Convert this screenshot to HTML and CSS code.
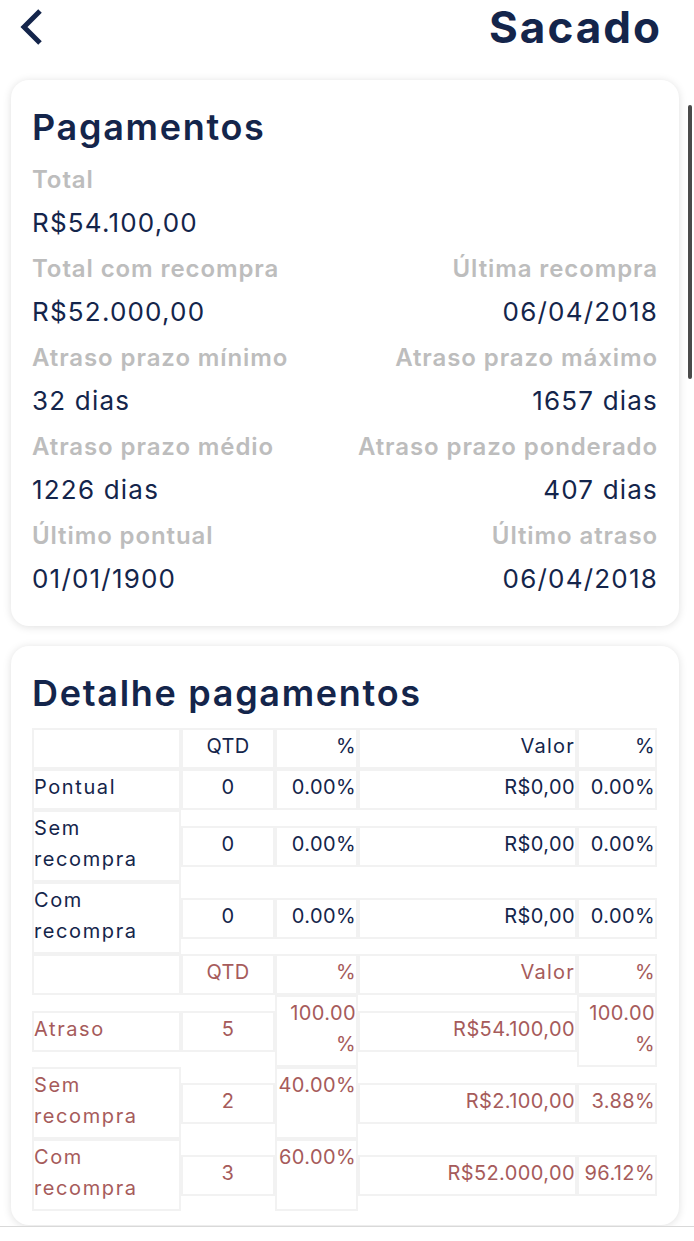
FILE: index.html
```html
<!DOCTYPE html>
<html lang="pt-BR">
<head>
    <meta charset="UTF-8">
    <meta name="viewport" content="width=device-width, initial-scale=1.0">
    <title>Sacado</title>
    <link rel="stylesheet" href="styles.css">
</head>
<body>
    <header class="topbar">
        <a class="back" href="#" aria-label="Voltar">
            <svg width="30" height="40" viewBox="0 0 30 40">
                <path d="M22 4 L6 20 L22 36" fill="none" stroke="#14254b" stroke-width="5"/>
            </svg>
        </a>
        <h1 class="page-title">Sacado</h1>
    </header>

    <!-- Pagamentos -->
    <section class="card">
        <h2 class="card-title">Pagamentos</h2>
        <div class="info-grid">
            <div class="info">
                <div class="info-label">Total</div>
                <div class="info-value">R$54.100,00</div>
            </div>
            <div class="info"></div>

            <div class="info">
                <div class="info-label">Total com recompra</div>
                <div class="info-value">R$52.000,00</div>
            </div>
            <div class="info right">
                <div class="info-label">Última recompra</div>
                <div class="info-value">06/04/2018</div>
            </div>

            <div class="info">
                <div class="info-label">Atraso prazo mínimo</div>
                <div class="info-value">32 dias</div>
            </div>
            <div class="info right">
                <div class="info-label">Atraso prazo máximo</div>
                <div class="info-value">1657 dias</div>
            </div>

            <div class="info">
                <div class="info-label">Atraso prazo médio</div>
                <div class="info-value">1226 dias</div>
            </div>
            <div class="info right">
                <div class="info-label">Atraso prazo ponderado</div>
                <div class="info-value">407 dias</div>
            </div>

            <div class="info">
                <div class="info-label">Último pontual</div>
                <div class="info-value">01/01/1900</div>
            </div>
            <div class="info right">
                <div class="info-label">Último atraso</div>
                <div class="info-value">06/04/2018</div>
            </div>
        </div>
    </section>

    <!-- Detalhe pagamentos -->
    <section class="card card-detail">
        <h2 class="card-title">Detalhe pagamentos</h2>
        <div class="detail-table">
            <div class="trow">
                <div class="tcell c1"></div>
                <div class="tcell c2">QTD</div>
                <div class="tcell c3">%</div>
                <div class="tcell c4 word">Valor</div>
                <div class="tcell c5">%</div>
            </div>
            <div class="trow">
                <div class="tcell c1">Pontual</div>
                <div class="tcell c2">0</div>
                <div class="tcell c3">0.00%</div>
                <div class="tcell c4">R$0,00</div>
                <div class="tcell c5">0.00%</div>
            </div>
            <div class="trow">
                <div class="tcell c1">Sem recompra</div>
                <div class="tcell c2">0</div>
                <div class="tcell c3">0.00%</div>
                <div class="tcell c4">R$0,00</div>
                <div class="tcell c5">0.00%</div>
            </div>
            <div class="trow">
                <div class="tcell c1">Com recompra</div>
                <div class="tcell c2">0</div>
                <div class="tcell c3">0.00%</div>
                <div class="tcell c4">R$0,00</div>
                <div class="tcell c5">0.00%</div>
            </div>

            <div class="trow late">
                <div class="tcell c1"></div>
                <div class="tcell c2">QTD</div>
                <div class="tcell c3">%</div>
                <div class="tcell c4 word">Valor</div>
                <div class="tcell c5">%</div>
            </div>
            <div class="trow late">
                <div class="tcell c1">Atraso</div>
                <div class="tcell c2">5</div>
                <div class="tcell c3">100.00<wbr>%</div>
                <div class="tcell c4">R$54.100,00</div>
                <div class="tcell c5">100.00<wbr>%</div>
            </div>
            <div class="trow late">
                <div class="tcell c1">Sem recompra</div>
                <div class="tcell c2">2</div>
                <div class="tcell c3">40.00%</div>
                <div class="tcell c4">R$2.100,00</div>
                <div class="tcell c5">3.88%</div>
            </div>
            <div class="trow late">
                <div class="tcell c1">Com recompra</div>
                <div class="tcell c2">3</div>
                <div class="tcell c3">60.00%</div>
                <div class="tcell c4">R$52.000,00</div>
                <div class="tcell c5">96.12%</div>
            </div>
        </div>
    </section>

    <div class="scroll-thumb"></div>
    <div class="bottom-bar"></div>
</body>
</html>
```

FILE: styles.css
```css
body {
    font-family: Inter, "Open Sans", sans-serif;
    margin: 0;
    padding: 0 0 40px;
    background-color: #fff;
    color: #14254b;
}
.topbar {
    height: 54px;
    display: flex;
    align-items: center;
    justify-content: space-between;
    padding: 0 32px 0 18px;
}
.back {
    display: flex;
}
.page-title {
    margin: 0;
    font-size: 44px;
    font-weight: 700;
    letter-spacing: 2px;
    line-height: 54px;
}
.card {
    margin: 26px 15px 0 11px;
    padding: 27px 22px 32px 21px;
    background-color: #fff;
    border-radius: 18px;
    box-shadow: 0 1px 8px rgba(0,0,0,0.13);
}
.card-detail {
    margin-top: 20px;
    padding-bottom: 14px;
}
.card-title {
    margin: 0 0 18px;
    font-size: 36px;
    font-weight: 600;
    line-height: 40px;
    letter-spacing: 1.7px;
}
.card-detail .card-title {
    margin-bottom: 15px;
}
.info-grid {
    display: grid;
    grid-template-columns: 1fr 1fr;
    row-gap: 16px;
}
.info.right {
    text-align: right;
}
.info-label {
    color: #bdbdbd;
    font-size: 24px;
    font-weight: 600;
    line-height: 30px;
    letter-spacing: 0.9px;
    margin-bottom: 13px;
    white-space: nowrap;
}
.info-value {
    font-size: 26px;
    line-height: 30px;
    letter-spacing: 1.2px;
}
.info.right .info-label,
.info.right .info-value {
    margin-right: -1px;
}
.detail-table {
    font-size: 20px;
    letter-spacing: 0.4px;
}
.trow {
    display: flex;
    align-items: center;
}
.tcell {
    box-sizing: border-box;
    border: 2px solid #f2f2f2;
    padding: 1px 0 5px;
    line-height: 31px;
    min-height: 41px;
    text-align: right;
}
.c1 { width: 149px; text-align: left; letter-spacing: 1.6px; }
.c2 { width: 94px; text-align: center; }
.c3 { width: 83px; }
.c4 { width: 219px; }
.c5 { width: 80px; }
.word {
    letter-spacing: 1.2px;
}
.late {
    color: #a65b5b;
}
.late .c3 {
    align-self: stretch;
}
.scroll-thumb {
    position: fixed;
    top: 105px;
    right: 2px;
    width: 4px;
    height: 274px;
    border-radius: 2px;
    background-color: #4a4a4a;
}
.bottom-bar {
    position: fixed;
    left: 0;
    right: 0;
    bottom: 0;
    height: 14px;
    background-color: #fff;
    border-top: 1px solid #d9d9d9;
}
```
